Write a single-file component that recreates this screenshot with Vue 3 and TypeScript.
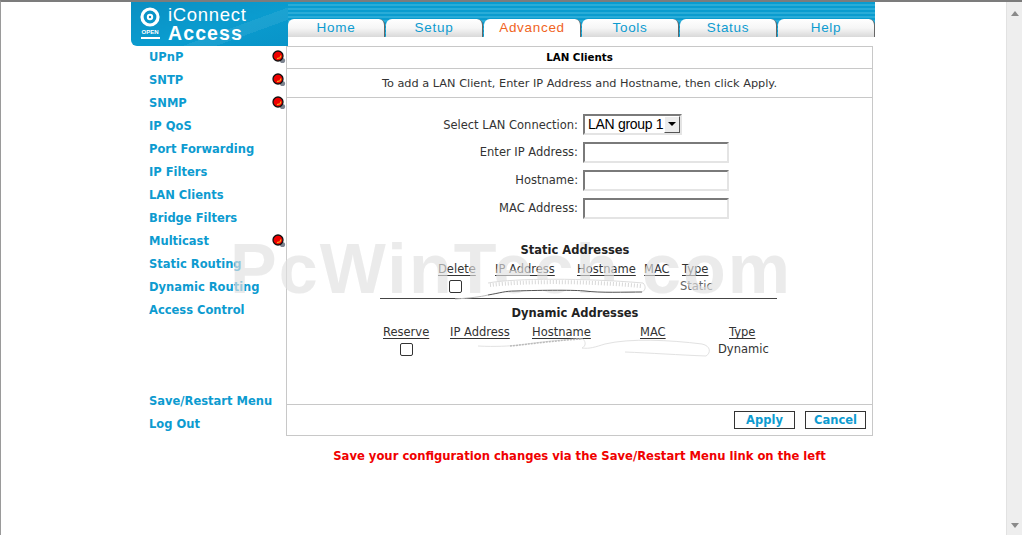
<script setup lang="ts">
const menuTop = [
  { label: 'UPnP', alert: true },
  { label: 'SNTP', alert: true },
  { label: 'SNMP', alert: true },
  { label: 'IP QoS', alert: false },
  { label: 'Port Forwarding', alert: false },
  { label: 'IP Filters', alert: false },
  { label: 'LAN Clients', alert: false },
  { label: 'Bridge Filters', alert: false },
  { label: 'Multicast', alert: true },
  { label: 'Static Routing', alert: false },
  { label: 'Dynamic Routing', alert: false },
  { label: 'Access Control', alert: false }
]
const menuBottom = ['Save/Restart Menu', 'Log Out']
const tabs = ['Home', 'Setup', 'Advanced', 'Tools', 'Status', 'Help']
const fields = ['Enter IP Address:', 'Hostname:', 'MAC Address:']
</script>

<template>
  <div class="page">
    <div class="main">
      <div class="shell">
        <header class="head">
          <div class="logo">
            <div class="mark">
              <svg width="20" height="20" viewBox="0 0 20 20">
                <circle cx="10" cy="10" r="8" fill="none" stroke="#fff" stroke-width="3.2" />
                <circle cx="10" cy="10" r="3.2" fill="#fff" />
                <circle cx="10" cy="10" r="1.2" fill="#0a8fc2" />
              </svg>
              <span class="open">OPEN</span>
            </div>
            <div class="words">
              <span class="w1">iConnect</span>
              <span class="w2">Access</span>
            </div>
          </div>
          <nav class="tabbar">
            <a v-for="t in tabs" :key="t" class="tab" :class="{ on: t === 'Advanced' }">{{ t }}</a>
          </nav>
        </header>

        <div class="columns">
          <aside class="side">
            <ul class="menu">
              <li v-for="m in menuTop" :key="m.label">
                <a>{{ m.label }}</a>
                <svg v-if="m.alert" class="dot" width="14" height="14" viewBox="0 0 14 14">
                  <circle cx="10.5" cy="10.5" r="2.6" fill="#7d8490" />
                  <circle cx="6" cy="6" r="5" fill="#f00000" stroke="#111" stroke-width="1.3" />
                  <path d="M5 8.6 L8 7.8 L9 5.6" fill="none" stroke="#f7a51e" stroke-width="1.2" />
                </svg>
              </li>
            </ul>
            <ul class="menu lower">
              <li v-for="m in menuBottom" :key="m"><a>{{ m }}</a></li>
            </ul>
          </aside>

          <div class="content">
            <section class="panel">
              <h1 class="title">LAN Clients</h1>
              <p class="hint">To add a LAN Client, Enter IP Address and Hostname, then click Apply.</p>
              <div class="body">
                <div class="form">
                  <label class="row first">
                    <span>Select LAN Connection:</span>
                    <span class="select"><span class="val">LAN group 1</span><span class="arrow"></span></span>
                  </label>
                  <label v-for="f in fields" :key="f" class="row">
                    <span>{{ f }}</span>
                    <input class="inp" type="text" />
                  </label>
                </div>

                <h2 class="sub static-h">Static Addresses</h2>
                <div class="grid g-static">
                  <u>Delete</u><u>IP Address</u><u>Hostname</u><u>MAC</u><u>Type</u>
                  <span class="cell-c"><i class="box"></i></span>
                  <span class="smear-cell">
                    <svg class="smear s-static" width="200" height="30" viewBox="0 0 200 30">
                      <path d="M33 11 C60 6 130 6 188 11 C191 14 191 18 187 20 C170 20 145 21 130 19 C120 18 90 18 60 19 C50 19 45 21 33 23 Z" fill="#fff" />
                      <path d="M35 13 C70 9 130 9 186 14" fill="none" stroke="#d8d8d8" stroke-width="4" stroke-dasharray="1 2" />
                      <path d="M33 11 C60 6 130 6 188 11 C191 14 191 18 187 20" fill="none" stroke="#ddd" stroke-width="1" />
                      <path d="M33 23 C45 21 50 19 60 19 C90 18 120 18 130 19 C145 21 170 20 187 20" fill="none" stroke="#555" stroke-width="1" />
                      <path d="M0 27 C15 26 25 25 33 23" fill="none" stroke="#bbb" stroke-width="1" />
                    </svg>
                  </span>
                  <span class="type-s">Static</span>
                </div>
                <hr class="rule" />
                <h2 class="sub dyn-h">Dynamic Addresses</h2>
                <div class="grid g-dyn">
                  <u>Reserve</u><u>IP Address</u><u>Hostname</u><u class="mac">MAC</u><u class="ty">Type</u>
                  <span class="cell-c"><i class="box"></i></span>
                  <span class="smear-cell">
                    <svg class="smear s-dyn" width="250" height="30" viewBox="0 0 250 30">
                      <path d="M8 14 C25 15 40 14 50 13 C70 10 95 7 113 7 C116 10 116 14 112 16 C120 17 125 15 135 12 C160 6 200 8 232 12 C241 14 241 21 236 24 C210 23 180 21 155 20" fill="none" stroke="#e2e2e2" stroke-width="1" />
                      <path d="M40 14 C60 12 90 8 112 7" fill="none" stroke="#bbb" stroke-width="1.5" stroke-dasharray="2 1" />
                    </svg>
                  </span>
                  <span class="type-d">Dynamic</span>
                </div>
                <div class="watermark">PcWinTech.com</div>
              </div>
              <div class="foot">
                <button class="btn">Apply</button>
                <button class="btn">Cancel</button>
              </div>
            </section>
            <p class="warn">Save your configuration changes via the Save/Restart Menu link on the left</p>
          </div>
        </div>
      </div>
    </div>

    <div class="scroll">
      <span class="up"></span>
      <span class="down"></span>
    </div>
  </div>
</template>

<style>
html, body { margin: 0; background: #fff; overflow: hidden; }
</style>

<style scoped>
.page {
  display: flex;
  height: 535px;
  box-sizing: border-box;
  border-top: 2px solid #7c7c7c;
  border-left: 1px solid #9a9a9a;
  font-family: "DejaVu Sans", Verdana, sans-serif;
  font-size: 11px;
  color: #333;
  background: #fff;
}
.main { flex: 1; padding-left: 130px; }
.shell { width: 744px; }

.head { display: flex; height: 44px; align-items: flex-start; }
.logo {
  width: 157px;
  height: 44px;
  box-sizing: border-box;
  padding: 5px 0 0 9px;
  display: flex;
  gap: 8px;
  border-radius: 0 0 0 6px;
  color: #fff;
  background:
    linear-gradient(160deg, transparent 62%, rgba(255, 255, 255, 0.07) 62% 74%, transparent 74%),
    linear-gradient(165deg, #0a8fc2 0, #0a9ccf 55%, #0994c8 100%);
}
.mark { display: flex; flex-direction: column; align-items: center; width: 20px; }
.mark svg { display: block; }
.open {
  margin-top: 2px;
  width: 19px;
  font: bold 6px/7px "Liberation Sans", sans-serif;
  text-align: center;
  border-bottom: 2px solid #fff;
  padding-bottom: 1px;
}
.words { display: flex; flex-direction: column; font-family: "Liberation Sans", sans-serif; margin-top: -2px; }
.w1 { font-size: 18.5px; line-height: 19px; font-weight: 400; letter-spacing: 0.7px; }
.w2 { font-size: 19.5px; line-height: 18px; font-weight: 700; letter-spacing: 1.1px; }

.tabbar {
  flex: 1;
  height: 35px;
  box-sizing: border-box;
  display: flex;
  align-items: flex-end;
  gap: 1px;
  background: repeating-linear-gradient(180deg, #0a9ccf 0 2px, #29acd8 2px 4px);
}
.tab {
  width: 97px;
  height: 18px;
  box-sizing: border-box;
  text-align: center;
  font: 13.5px/17px "Liberation Sans", sans-serif;
  letter-spacing: 0.7px;
  color: #0d9bd0;
  border-radius: 6px 6px 0 0;
  border-right: 1px solid #666;
  background: linear-gradient(180deg, #fff 0, #f6f6f6 50%, #d9d9d9 100%);
}
.tab.on { color: #f0641e; background: #fff; }

.columns { display: flex; }
.side { width: 155px; height: 390px; }
.menu { list-style: none; margin: 0; padding: 0 0 0 18px; }
.menu li {
  height: 23px;
  line-height: 22px;
  position: relative;
  font-weight: 700;
  font-size: 11.5px;
  color: #0d9bd0;
}
.lower { margin-top: 68px; }
.dot { position: absolute; left: 123px; top: 4px; }

.content { width: 587px; }
.panel { border: 1px solid #c8c8c8; }
.title {
  margin: 0;
  height: 21px;
  line-height: 21px;
  text-align: center;
  font-size: 10.3px;
  font-weight: 700;
  color: #000;
  border-bottom: 1px solid #c8c8c8;
}
.hint {
  margin: 0;
  height: 28px;
  line-height: 29px;
  text-align: center;
  font-size: 11.3px;
  border-bottom: 1px solid #c8c8c8;
}
.body { position: relative; height: 306px; }
.watermark {
  position: absolute;
  left: -57px;
  top: 133px;
  font: bold 70px/76px "Liberation Sans", sans-serif;
  letter-spacing: 2.1px;
  color: rgba(225, 225, 225, 0.65);
  white-space: nowrap;
  pointer-events: none;
}
.form { padding-top: 13px; }
.row {
  display: flex;
  justify-content: flex-end;
  align-items: center;
  height: 28px;
  gap: 5px;
  width: 442px;
  font-size: 11.5px;
}
.row.first { height: 27px; width: 395px; }
.select {
  display: flex;
  align-items: center;
  justify-content: space-between;
  width: 99px;
  height: 21px;
  box-sizing: border-box;
  border: 2px solid;
  border-color: #7a7a7a #e4e4e4 #e4e4e4 #7a7a7a;
  font: 14px/17px "Liberation Sans", sans-serif;
  letter-spacing: -0.3px;
  color: #000;
  padding-left: 3px;
  white-space: nowrap;
}
.arrow {
  width: 16px;
  height: 17px;
  box-sizing: border-box;
  background: #ececec;
  border: 1px solid;
  border-color: #fff #555 #555 #fff;
  position: relative;
  flex: none;
}
.arrow::after {
  content: "";
  position: absolute;
  left: 3px;
  top: 5px;
  border: 4px solid transparent;
  border-top: 4px solid #000;
  border-bottom: 0;
}
.inp {
  width: 146px;
  height: 21px;
  box-sizing: border-box;
  border: 2px solid;
  border-color: #7a7a7a #e4e4e4 #e4e4e4 #7a7a7a;
  background: #fff;
  outline: none;
  padding: 0;
}

.sub {
  margin: 0;
  text-align: center;
  font-size: 11.5px;
  font-weight: 700;
  color: #222;
  width: 576px;
  position: relative;
  z-index: 1;
  line-height: 14px;
}
.static-h { margin-top: 21px; }
.dyn-h { margin-top: 7px; }
.grid {
  display: grid;
  grid-auto-rows: 17px;
  align-items: center;
  font-size: 11.5px;
  line-height: 15px;
  position: relative;
}
.grid u { text-underline-offset: 2px; }
.g-static {
  margin: 4px 0 0 151px;
  grid-template-columns: 57px 82px 67px 38px 40px;
}
.g-dyn {
  margin: 4px 0 0 96px;
  grid-template-columns: 67px 82px 86px 102px 40px;
}
.mac { margin-left: 22px; }
.ty { margin-left: 9px; }
.cell-c { display: flex; padding-left: 11px; }
.g-dyn .cell-c { padding-left: 17px; }
.box {
  width: 11px;
  height: 11px;
  border: 1px solid #333;
  border-radius: 2px;
  background: #fff;
  position: relative;
  z-index: 1;
}
.smear-cell { grid-column: span 3; position: relative; height: 17px; }
.smear { position: absolute; z-index: 1; }
.s-static { left: -40px; top: -6px; }
.s-dyn { left: 20px; top: -9px; }
.type-s { margin-left: -2px; color: #666; }
.type-d { margin-left: -2px; white-space: nowrap; }
.rule {
  margin: 3px 0 0 93px;
  width: 397px;
  height: 1px;
  border: 0;
  background: #444;
}

.foot {
  height: 30px;
  border-top: 1px solid #c8c8c8;
  display: flex;
  justify-content: flex-end;
  align-items: center;
  gap: 10px;
  padding-right: 6px;
}
.btn {
  width: 61px;
  height: 18px;
  padding: 1px 0 0;
  box-sizing: border-box;
  border: 1px solid #333;
  background: #fff;
  font: 700 11.5px/15px "DejaVu Sans", sans-serif;
  color: #0d9bd0;
}
.warn {
  margin: 13px 0 0;
  text-align: center;
  font-weight: 700;
  font-size: 11.6px;
  color: #f00000;
}

.scroll {
  width: 16px;
  background: #eeeeee;
  border-left: 1px solid #e2e2e2;
  box-sizing: border-box;
  display: flex;
  flex-direction: column;
  justify-content: space-between;
  align-items: center;
  padding: 9px 0 7px;
}
.up { border: 4px solid transparent; border-bottom: 5px solid #8a8a8a; border-top: 0; }
.down { border: 4px solid transparent; border-top: 5px solid #8a8a8a; border-bottom: 0; }
</style>
